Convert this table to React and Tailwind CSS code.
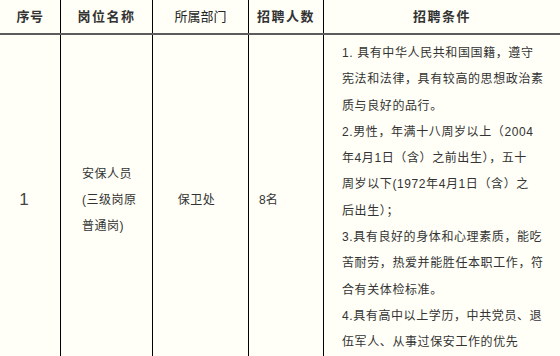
const conditionLines = [
  '1. 具有中华人民共和国国籍，遵守',
  '宪法和法律，具有较高的思想政治素',
  '质与良好的品行。',
  '2.男性，年满十八周岁以上（2004',
  '年4月1日（含）之前出生），五十',
  '周岁以下(1972年4月1日（含）之',
  '后出生）；',
  '3.具有良好的身体和心理素质，能吃',
  '苦耐劳，热爱并能胜任本职工作，符',
  '合有关体检标准。',
  '4.具有高中以上学历，中共党员、退',
  '伍军人、从事过保安工作的优先',
];

const font = { fontFamily: '"Liberation Sans", "Noto Sans CJK SC", sans-serif' };

export default function App() {
  return (
    <div className="w-[560px] h-[356px] overflow-hidden bg-[#fffff7] text-[#333]" style={font}>
      {/* header */}
      <div className="grid grid-cols-[60px_92px_96px_75px_1fr] h-[35px] border-b-2 border-[#5c5c5c] text-[13px] font-bold">
        <div className="flex items-center justify-center tracking-[0.5px]">序号</div>
        <div className="flex items-center justify-center border-l border-black tracking-[1.5px]">岗位名称</div>
        <div className="flex items-center justify-center border-l border-black font-normal text-[#222]">所属部门</div>
        <div className="flex items-center justify-center border-l border-black tracking-[1.5px]">招聘人数</div>
        <div className="flex items-center justify-center border-l border-black tracking-[1.5px]">招聘条件</div>
      </div>

      {/* row */}
      <div className="grid grid-cols-[60px_92px_96px_75px_1fr] h-[330px] text-[12px]">
        <div className="flex items-center justify-center pr-3 text-[17px] text-[#444]">1</div>
        <div className="flex items-center border-l border-black pl-[21px] leading-[26px]">
          <div className="w-[60px] tracking-[0.5px]">
            安保人员<br />(三级岗原<br />普通岗)
          </div>
        </div>
        <div className="flex items-center justify-center border-l border-black pr-2 tracking-[0.5px]">保卫处</div>
        <div className="flex items-center border-l border-black pl-[10px]">8名</div>
        <div className="border-l border-black pl-[18px] pt-[5px] leading-[26.3px] tracking-[0.6px]">
          {conditionLines.map((line) => (
            <div key={line} className="whitespace-nowrap">{line}</div>
          ))}
        </div>
      </div>
    </div>
  );
}
